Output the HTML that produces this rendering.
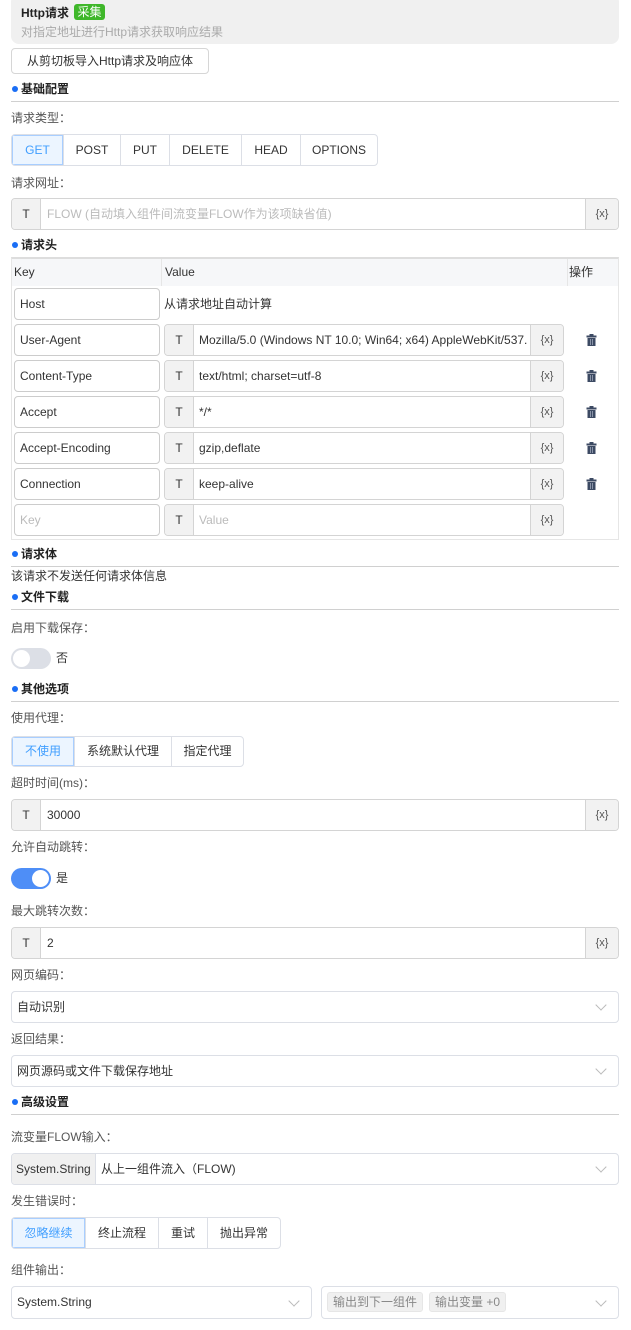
<!DOCTYPE html>
<html><head><meta charset="utf-8"><style>
*{box-sizing:border-box;margin:0;padding:0}
body{width:631px;height:1330px;position:relative;background:#fff;font-family:"Liberation Sans","Noto Sans CJK SC",sans-serif;font-size:12px;color:#333;overflow:hidden}
.a{position:absolute}
.t{position:absolute;height:18px;line-height:18px;white-space:nowrap}
.lbl{color:#555}
.sec{position:absolute;left:11px;width:608px;height:13px;border-bottom:1px solid #d0d0d0}
.sec b{position:absolute;left:10px;top:-9px;font-size:12px;font-weight:bold;color:#222;line-height:18px}
.sec i{position:absolute;left:1px;top:-3px;width:6px;height:6px;border-radius:50%;background:#1a6ef5}
.box{position:absolute;border:1px solid #dcdfe6;border-radius:4px;background:#fff}
.inp{position:absolute;border:1px solid #d4d4d4;border-radius:4px;background:#fff;overflow:hidden}
.inp .T{position:absolute;left:0;top:0;bottom:0;width:29px;background:#f2f2f2;border-right:1px solid #d4d4d4;text-align:center;color:#333}
.inp .X{position:absolute;right:0;top:0;bottom:0;width:33px;background:#f2f2f2;border-left:1px solid #d4d4d4;text-align:center;color:#555;font-size:11px}
.inp .v{position:absolute;left:35px;top:0;white-space:nowrap}
.seg{position:absolute;border:1px solid #dcdfe6;border-radius:4px;display:flex;overflow:hidden;background:#fff}
.seg div{border-left:1px solid #dcdfe6;text-align:center;color:#333}
.seg div:first-child{border-left:none;background:#ecf5ff;color:#409eff;box-shadow:inset 0 0 0 1px #a8ceff}
.chev{position:absolute;width:8px;height:8px;border-right:1px solid #bbb;border-bottom:1px solid #bbb;transform:rotate(45deg)}
</style></head><body>

<div class="a" style="left:11px;top:-6px;width:608px;height:50px;background:#f0f0f0;border-radius:8px"></div>
<div class="t" style="left:21px;top:4px;font-weight:bold;font-size:12px;color:#222">Http请求</div>
<div class="a" style="left:74px;top:4px;width:31px;height:16px;background:#3fb72a;border-radius:3px;color:#fff;text-align:center;line-height:16px;font-size:12px">采集</div>
<div class="t" style="left:21px;top:23px;color:#aaa">对指定地址进行Http请求获取响应结果</div>

<div class="box" style="left:11px;top:48px;width:198px;height:26px;border-color:#d6d6d6"></div>
<div class="t" style="left:11px;width:198px;text-align:center;top:52px;color:#333">从剪切板导入Http请求及响应体</div>

<div class="sec" style="top:89px"><i></i><b>基础配置</b></div>
<div class="t lbl" style="left:11px;top:109px">请求类型：</div>
<div class="seg" style="left:11px;top:134px;height:32px;line-height:30px">
<div style="width:51px">GET</div><div style="width:57px">POST</div><div style="width:49px">PUT</div><div style="width:72px">DELETE</div><div style="width:59px">HEAD</div><div style="width:77px">OPTIONS</div></div>

<div class="t lbl" style="left:11px;top:174px">请求网址：</div>
<div class="inp" style="left:11px;top:198px;width:608px;height:32px;line-height:30px"><div class="T">T</div><div class="v" style="color:#bbb">FLOW (自动填入组件间流变量FLOW作为该项缺省值)</div><div class="X">{x}</div></div>

<div class="sec" style="top:245px;border-bottom:none"><i></i><b>请求头</b></div>
<div class="a" style="left:11px;top:257px;width:608px;height:283px;border:1px solid #e6e6e6;border-top:2px solid #ddd"></div>
<div class="a" style="left:12px;top:259px;width:606px;height:27px;background:#f6f7f9"></div>
<div class="a" style="left:161px;top:259px;width:1px;height:27px;background:#e6e6e6"></div>
<div class="a" style="left:567px;top:259px;width:1px;height:27px;background:#e6e6e6"></div>
<div class="t" style="left:14px;top:263px">Key</div>
<div class="t" style="left:165px;top:263px">Value</div>
<div class="t" style="left:569px;top:263px">操作</div>

<div class="box" style="left:14px;top:288px;width:146px;height:32px;border-color:#ccc"></div>
<div class="t" style="left:20px;top:295px">Host</div>
<div class="t" style="left:164px;top:295px">从请求地址自动计算</div>

<div class="sec" style="top:554px"><i></i><b>请求体</b></div>
<div class="t" style="left:11px;top:567px">该请求不发送任何请求体信息</div>
<div class="sec" style="top:597px"><i></i><b>文件下载</b></div>
<div class="t lbl" style="left:11px;top:619px">启用下载保存：</div>
<div class="a" style="left:11px;top:648px;width:40px;height:21px;border-radius:11px;background:#dcdfe6"></div>
<div class="a" style="left:13px;top:650px;width:17px;height:17px;border-radius:50%;background:#fff"></div>
<div class="t" style="left:56px;top:649px">否</div>

<div class="sec" style="top:689px"><i></i><b>其他选项</b></div>
<div class="t lbl" style="left:11px;top:709px">使用代理：</div>
<div class="seg" style="left:11px;top:736px;height:31px;line-height:29px">
<div style="width:62px">不使用</div><div style="width:97px">系统默认代理</div><div style="width:72px">指定代理</div></div>

<div class="t lbl" style="left:11px;top:774px">超时时间(ms)：</div>
<div class="inp" style="left:11px;top:799px;width:608px;height:32px;line-height:30px"><div class="T">T</div><div class="v">30000</div><div class="X">{x}</div></div>
<div class="t lbl" style="left:11px;top:838px">允许自动跳转：</div>
<div class="a" style="left:11px;top:868px;width:40px;height:21px;border-radius:11px;background:#4e8ef7"></div>
<div class="a" style="left:32px;top:870px;width:17px;height:17px;border-radius:50%;background:#fff"></div>
<div class="t" style="left:56px;top:869px">是</div>

<div class="t lbl" style="left:11px;top:902px">最大跳转次数：</div>
<div class="inp" style="left:11px;top:927px;width:608px;height:32px;line-height:30px"><div class="T">T</div><div class="v">2</div><div class="X">{x}</div></div>

<div class="t lbl" style="left:11px;top:966px">网页编码：</div>
<div class="box" style="left:11px;top:991px;width:608px;height:32px"></div>
<div class="t" style="left:17px;top:998px">自动识别</div>
<div class="chev" style="left:597px;top:1001px"></div>

<div class="t lbl" style="left:11px;top:1030px">返回结果：</div>
<div class="box" style="left:11px;top:1055px;width:608px;height:32px"></div>
<div class="t" style="left:17px;top:1062px">网页源码或文件下载保存地址</div>
<div class="chev" style="left:597px;top:1065px"></div>

<div class="sec" style="top:1102px"><i></i><b>高级设置</b></div>
<div class="t lbl" style="left:11px;top:1128px">流变量FLOW输入：</div>
<div class="box" style="left:11px;top:1153px;width:608px;height:32px;overflow:hidden"><div class="a" style="left:0;top:0;width:84px;height:30px;background:#f0f0f0;border-right:1px solid #dcdfe6"></div></div>
<div class="t" style="left:16px;top:1160px">System.String</div>
<div class="t" style="left:101px;top:1160px">从上一组件流入（FLOW)</div>
<div class="chev" style="left:597px;top:1163px"></div>

<div class="t lbl" style="left:11px;top:1192px">发生错误时：</div>
<div class="seg" style="left:11px;top:1217px;height:32px;line-height:30px">
<div style="width:73px">忽略继续</div><div style="width:73px">终止流程</div><div style="width:49px">重试</div><div style="width:73px">抛出异常</div></div>

<div class="t lbl" style="left:11px;top:1261px">组件输出：</div>
<div class="box" style="left:11px;top:1286px;width:301px;height:33px"></div>
<div class="t" style="left:17px;top:1293px">System.String</div>
<div class="chev" style="left:290px;top:1297px"></div>
<div class="box" style="left:321px;top:1286px;width:298px;height:33px"></div>
<div class="a" style="left:327px;top:1292px;width:96px;height:20px;background:#f0f0f0;border:1px solid #e6e6e6;border-radius:3px;color:#888;line-height:18px;text-align:center">输出到下一组件</div>
<div class="a" style="left:429px;top:1292px;width:77px;height:20px;background:#f0f0f0;border:1px solid #e6e6e6;border-radius:3px;color:#888;line-height:18px;text-align:center">输出变量 +0</div>
<div class="chev" style="left:597px;top:1297px"></div>

<div class="box" style="left:14px;top:324px;width:146px;height:32px;border-color:#ccc"></div><div class="t" style="left:20px;top:331px">User-Agent</div>
<div class="inp" style="left:164px;top:324px;width:400px;height:32px;line-height:30px"><div class="T">T</div><div class="v" style="left:34px">Mozilla/5.0 (Windows NT 10.0; Win64; x64) AppleWebKit/537.</div><div class="X">{x}</div></div>
<div class="box" style="left:14px;top:360px;width:146px;height:32px;border-color:#ccc"></div><div class="t" style="left:20px;top:367px">Content-Type</div>
<div class="inp" style="left:164px;top:360px;width:400px;height:32px;line-height:30px"><div class="T">T</div><div class="v" style="left:34px">text/html; charset=utf-8</div><div class="X">{x}</div></div>
<div class="box" style="left:14px;top:396px;width:146px;height:32px;border-color:#ccc"></div><div class="t" style="left:20px;top:403px">Accept</div>
<div class="inp" style="left:164px;top:396px;width:400px;height:32px;line-height:30px"><div class="T">T</div><div class="v" style="left:34px">*/*</div><div class="X">{x}</div></div>
<div class="box" style="left:14px;top:432px;width:146px;height:32px;border-color:#ccc"></div><div class="t" style="left:20px;top:439px">Accept-Encoding</div>
<div class="inp" style="left:164px;top:432px;width:400px;height:32px;line-height:30px"><div class="T">T</div><div class="v" style="left:34px">gzip,deflate</div><div class="X">{x}</div></div>
<div class="box" style="left:14px;top:468px;width:146px;height:32px;border-color:#ccc"></div><div class="t" style="left:20px;top:475px">Connection</div>
<div class="inp" style="left:164px;top:468px;width:400px;height:32px;line-height:30px"><div class="T">T</div><div class="v" style="left:34px">keep-alive</div><div class="X">{x}</div></div>
<div class="box" style="left:14px;top:504px;width:146px;height:32px;border-color:#ccc"></div><div class="t" style="left:20px;top:511px;color:#bbb">Key</div>
<div class="inp" style="left:164px;top:504px;width:400px;height:32px;line-height:30px"><div class="T">T</div><div class="v" style="left:34px;color:#bbb">Value</div><div class="X">{x}</div></div>

<svg class="a" style="left:586px;top:334px" width="11" height="12" viewBox="0 0 11 12"><rect x="3.5" y="0" width="4" height="2" fill="#3c4a63"/><rect x="0.5" y="1.5" width="10" height="2" fill="#3c4a63"/><rect x="1.5" y="4" width="8" height="8" fill="#3c4a63"/><rect x="4" y="5" width="1" height="6" fill="#8a94a8"/><rect x="6" y="5" width="1" height="6" fill="#8a94a8"/></svg>
<svg class="a" style="left:586px;top:370px" width="11" height="12" viewBox="0 0 11 12"><rect x="3.5" y="0" width="4" height="2" fill="#3c4a63"/><rect x="0.5" y="1.5" width="10" height="2" fill="#3c4a63"/><rect x="1.5" y="4" width="8" height="8" fill="#3c4a63"/><rect x="4" y="5" width="1" height="6" fill="#8a94a8"/><rect x="6" y="5" width="1" height="6" fill="#8a94a8"/></svg>
<svg class="a" style="left:586px;top:406px" width="11" height="12" viewBox="0 0 11 12"><rect x="3.5" y="0" width="4" height="2" fill="#3c4a63"/><rect x="0.5" y="1.5" width="10" height="2" fill="#3c4a63"/><rect x="1.5" y="4" width="8" height="8" fill="#3c4a63"/><rect x="4" y="5" width="1" height="6" fill="#8a94a8"/><rect x="6" y="5" width="1" height="6" fill="#8a94a8"/></svg>
<svg class="a" style="left:586px;top:442px" width="11" height="12" viewBox="0 0 11 12"><rect x="3.5" y="0" width="4" height="2" fill="#3c4a63"/><rect x="0.5" y="1.5" width="10" height="2" fill="#3c4a63"/><rect x="1.5" y="4" width="8" height="8" fill="#3c4a63"/><rect x="4" y="5" width="1" height="6" fill="#8a94a8"/><rect x="6" y="5" width="1" height="6" fill="#8a94a8"/></svg>
<svg class="a" style="left:586px;top:478px" width="11" height="12" viewBox="0 0 11 12"><rect x="3.5" y="0" width="4" height="2" fill="#3c4a63"/><rect x="0.5" y="1.5" width="10" height="2" fill="#3c4a63"/><rect x="1.5" y="4" width="8" height="8" fill="#3c4a63"/><rect x="4" y="5" width="1" height="6" fill="#8a94a8"/><rect x="6" y="5" width="1" height="6" fill="#8a94a8"/></svg>

</body></html>
